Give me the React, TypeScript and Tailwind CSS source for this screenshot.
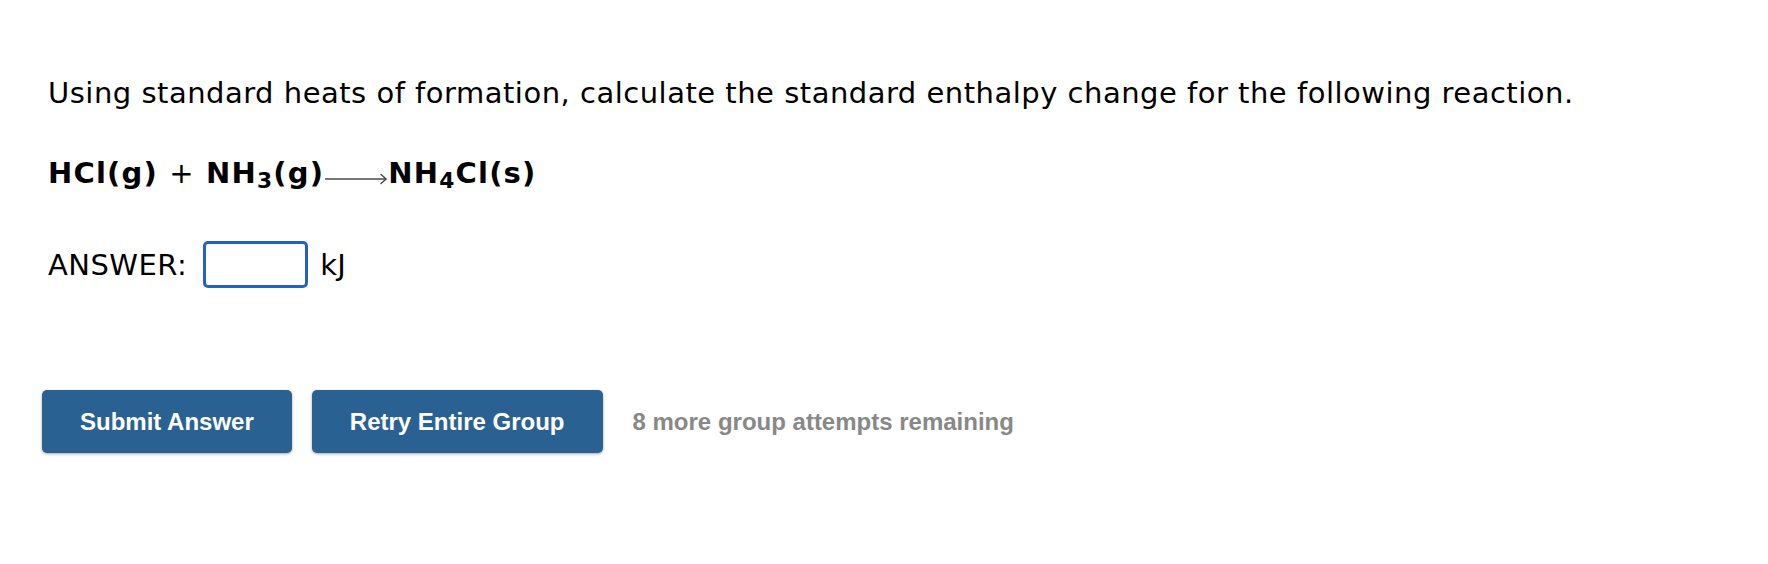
import React from 'react'

// Question body for a single enthalpy problem: prompt, reaction, answer field, actions.

const bodyFont = { fontFamily: '"DejaVu Sans", Verdana, sans-serif' }
const buttonFont = { fontFamily: '"Liberation Sans", Arial, Helvetica, sans-serif' }

function ReactionArrow() {
  return (
    <svg width="64" height="16" viewBox="0 0 64 16" className="inline-block align-[-3px]" fill="none">
      <path d="M1 9h61" stroke="#4a4a4a" strokeWidth="1.7" />
      <path d="M57 4.5L62.2 9 57 13.5" stroke="#4a4a4a" strokeWidth="1.5" strokeLinecap="round" strokeLinejoin="round" />
    </svg>
  )
}

function ActionButton({ label }: { label: string }) {
  return (
    <button
      type="button"
      style={buttonFont}
      className="h-[63px] px-[38px] rounded-[5px] bg-[#2a6193] text-white text-[24px] font-bold shadow-[0_1px_3px_rgba(0,0,0,0.35)] flex items-center"
    >
      {label}
    </button>
  )
}

export default function App() {
  return (
    <div className="min-h-screen w-full bg-white pl-[42px] pt-[77px] text-black">
      <div className="pl-[6px]" style={bodyFont}>
        <p className="text-[29px] leading-[32px] tracking-[0.5px]">
          Using standard heats of formation, calculate the standard enthalpy change for the following reaction.
        </p>

        <p className="mt-[48px] text-[29px] leading-[32px] font-bold tracking-[1.2px]">
          HCl(g) <span className="font-normal">+</span> NH<sub>3</sub>(g)
          <ReactionArrow />
          NH<sub>4</sub>Cl(s)
        </p>

        <div className="mt-[52px] flex items-center h-[47px] text-[29px] leading-[32px] tracking-[0.45px]">
          <span>ANSWER:</span>
          <input
            type="text"
            aria-label="answer"
            className="ml-[16px] w-[105px] h-[47px] border-[3px] border-[#2062c8] rounded-[5px] outline-none bg-white"
          />
          <span className="ml-[12px]">kJ</span>
        </div>
      </div>

      <div className="mt-[102px] flex items-center gap-[20px]">
        <ActionButton label="Submit Answer" />
        <ActionButton label="Retry Entire Group" />
        <span style={buttonFont} className="ml-[10px] text-[24px] font-bold text-[#888888]">
          8 more group attempts remaining
        </span>
      </div>
    </div>
  )
}
